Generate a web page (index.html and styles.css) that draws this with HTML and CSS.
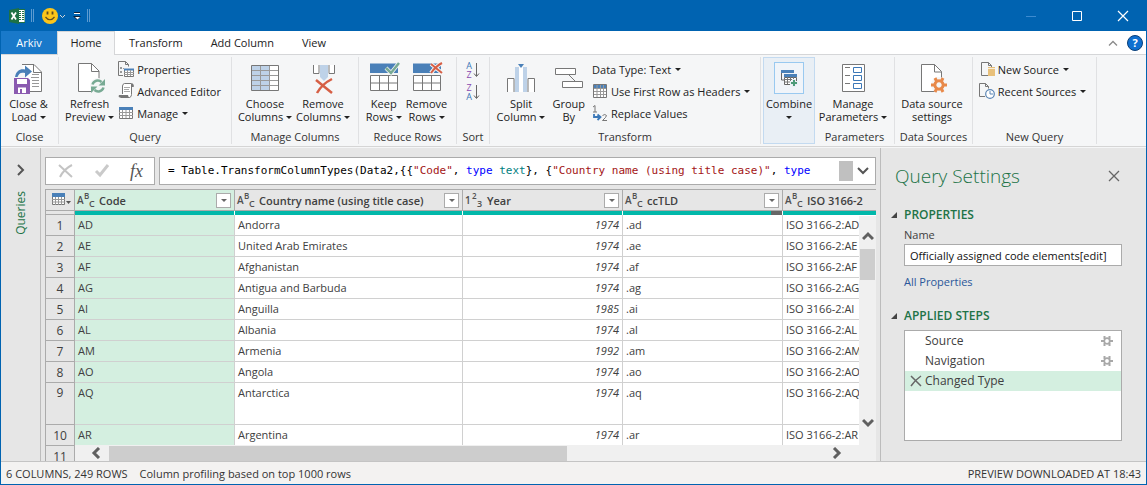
FILE: index.html
```html
<!DOCTYPE html>
<html lang="en">
<head>
<meta charset="utf-8">
<title>Power Query Editor</title>
<link rel="stylesheet" href="styles.css">
</head>
<body>
<svg class="defs" aria-hidden="true">
  <symbol id="gear" viewBox="0 0 16 16"><path fill="none" stroke="currentColor" stroke-width="3" d="M8 3.8a4.2 4.2 0 1 0 .01 0z"/><path stroke="currentColor" stroke-width="3" d="M4 1l2 4M12 1l-2 4M4 15l2-4M12 15l-2-4M0 8h4M12 8h4"/></symbol>
  <symbol id="minigear" viewBox="0 0 12 12"><circle cx="6" cy="6" r="2.8" fill="none" stroke="#a8a8a8" stroke-width="1.8"/><path stroke="#a8a8a8" stroke-width="2" d="M3.5 1v3M8.500 1v3M3.500 8v3M8.500 8v3M0 6h3M9 6h3"/></symbol>
</svg>
<div class="app">
  <header class="titlebar">
    <div class="quick">
      <svg width="16" height="16" viewBox="0 0 16 16"><path fill="#fff" d="M8 2h8v12H8z"/><path stroke="#1e7145" d="M9 3.5h3M9 5.5h3M9 7.5h3M9 9.5h3M9 11.5h3M13 3.5h2M13 5.5h2M13 7.5h2M13 9.5h2M13 11.5h2M8 1.5h8v13H8"  fill="none"/><path fill="#1e7145" d="M0 2l10-2v16L0 14z"/><path stroke="#fff" stroke-width="1.8" d="M2.5 4.5l4.5 7M7 4.5l-4.500 7"/></svg>
      <span class="tick"></span>
      <button class="plain smile" aria-label="Send a smile"><svg width="24" height="16" viewBox="0 0 24 16"><circle cx="8" cy="8" r="8" fill="#fcc51a"/><path d="M5.500 3.500v3M10.500 3.500v3" stroke="#604a20" stroke-width="1.800"/><path d="M3.500 9q4.500 5.500 9 0" fill="none" stroke="#604a20" stroke-width="1.200"/><path d="M18 7l2.500 2.500L23 7" fill="none" stroke="#d8d8d8"/></svg></button>
      <button class="plain" aria-label="Customize toolbar"><svg width="8" height="8" viewBox="0 0 8 8"><path d="M1 .5h6" stroke="#10233b"/><path d="M1 1.500h6" stroke="#fff"/><path d="M0 4h8L4 8z" fill="#10233b"/><path d="M2 5h5L4.500 7.500z" fill="#fff"/></svg></button>
      <span class="tick"></span>
    </div>
    <div class="winbtns">
      <button class="plain" aria-label="Minimize"><svg width="12" height="12"><path d="M1 6.500h10" stroke="#3d8bd0"/></svg></button>
      <button class="plain" aria-label="Maximize"><svg width="12" height="12"><path d="M1.500 1.500h9v9h-9z" fill="none" stroke="#fff"/></svg></button>
      <button class="plain" aria-label="Close"><svg width="12" height="12"><path d="M1 1l10 10M11 1L1 11" stroke="#fff" stroke-width="1.200"/></svg></button>
    </div>
  </header>
  <nav class="tabs">
    <button class="tab file">Arkiv</button>
    <button class="tab active">Home</button>
    <button class="tab">Transform</button>
    <button class="tab">Add Column</button>
    <button class="tab">View</button>
    <span class="tabend">
      <button class="plain" aria-label="Collapse the ribbon"><svg width="10" height="8"><path d="M1 6.500l4-4 4 4" fill="none" stroke="#8a8a8a" stroke-width="1.300"/></svg></button>
      <button class="help" aria-label="Help">?</button>
    </span>
  </nav>
  <section class="ribbon">
    <div class="group g-close">
      <div class="tools">
        <button class="big"><svg class="ico" viewBox="0 0 32 32"><path d="M9 2.500h12l7.500 7.500v19.500H17" fill="#fff" stroke="#777"/><path d="M20.500 2.500v8h8" fill="none" stroke="#777"/><path d="M19 12.500h7M18 15.500h8M19 18.500h7M19 21.500h7M19 24.500h7" stroke="#999"/><path d="M2 15C3 9 7 6.500 12 7.500V3.500l7 6-7 6v-4.500c-4-1-6 0-7.500 4z" fill="#4a80b8"/><path d="M1 16h14l2 2v14H1z" fill="#8a5ab0"/><path d="M4 17h10v5H4zM5 25.500h8V31H5z" fill="#fff"/><path d="M7 27h2v4H7z" fill="#8a5ab0"/></svg><span>Close &amp;<br>Load <i class="dd"></i></span></button>
      </div>
      <h3>Close</h3>
    </div>
    <div class="group g-query">
      <div class="tools">
        <button class="big"><svg class="ico" viewBox="0 0 32 32"><path d="M4.500 1.500h13l7.500 7.500v20.500H4.500z" fill="#fff" stroke="#777"/><path d="M17.500 1.500v8H25" fill="none" stroke="#777"/><circle cx="24" cy="24" r="8" fill="#f5f6f7"/><path d="M18.500 22.500a5.500 5.500 0 0 1 9-2.500M29.500 25.500a5.500 5.500 0 0 1-9 2.500" fill="none" stroke="#78aa94" stroke-width="2.500"/><path d="M31 17v6.500h-6.500zM17 31v-6.500h6.500z" fill="#78aa94"/></svg><span>Refresh<br>Preview <i class="dd"></i></span></button>
        <div class="stack">
          <button class="small"><svg class="sm" viewBox="0 0 16 16"><path d="M.5.500h7l3 3v2M5 14.500H.5V.5M7.500.5v3h3" fill="none" stroke="#777"/><path d="M2 6h2v2H2zM2 10h2v2H2z" fill="#999"/><path d="M5 7.500h1" stroke="#999"/><path d="M6.500 8.500h9v7h-9z" fill="#fff" stroke="#777"/><path d="M6 7.500h10v2H6z" fill="#4a80b8"/><path d="M6 11.500h10M6 13.500h10M9.500 9v6M12.500 9v6" stroke="#999"/></svg>Properties</button>
          <button class="small"><svg class="sm" viewBox="0 0 16 16"><path d="M4.500 11V3q0-2 2-2.500h7q2 0 2 3h-2v8q0 2.500-2 3H2.500" fill="#fff" stroke="#777"/><path d="M1 12h9q0 2 2 2.500H2Q0 14.500 1 12zM13 1h2v3h-2z" fill="#777"/><path d="M6 4.500h6M6 6.500h5M6 8.500h6" stroke="#aaa"/></svg>Advanced Editor</button>
          <button class="small"><svg class="sm" viewBox="0 0 16 16"><path d="M1.500 3.500h13v10h-13z" fill="#fff" stroke="#777"/><path d="M1 2h14v3H1z" fill="#4a80b8"/><path d="M1 7.500h14M1 10.500h14M4.500 5v8M8 5v8M11.500 5v8" stroke="#999"/></svg>Manage <i class="dd"></i></button>
        </div>
      </div>
      <h3>Query</h3>
    </div>
    <div class="group g-cols">
      <div class="tools">
        <button class="big"><svg class="ico" viewBox="0 0 32 32"><path d="M2.500 3.500h27v25h-27z" fill="#fff"/><path d="M3 4h18v24H3z" fill="#bed2e8"/><path d="M2.500 8.500h27M2.500 13.500h27M2.500 18.500h27M2.500 23.500h27M11.500 3.500v25M20.500 3.500v25" stroke="#999"/><path d="M2.500 3.500h27v25h-27z" fill="none" stroke="#777"/></svg><span>Choose<br>Columns <i class="dd"></i></span></button>
        <button class="big"><svg class="ico" viewBox="0 0 32 32"><path d="M6 3h22v9H6z" fill="#fff"/><path d="M6.500 3v8.500h5.500V3M27.500 3v8.500H22V3" fill="none" stroke="#777"/><path d="M13 3h8v12l-4 4-4-4z" fill="#bed2e8"/><path d="M9 18l16 13M25 17Q15 22 10 31" stroke="#d65f45" stroke-width="2.500" fill="none"/></svg><span>Remove<br>Columns <i class="dd"></i></span></button>
      </div>
      <h3>Manage Columns</h3>
    </div>
    <div class="group g-rows">
      <div class="tools">
        <button class="big"><svg class="ico" viewBox="0 0 32 32"><path d="M2 1.500h28v9.500H2z" fill="#4a80b8"/><path d="M2.500 13.500h27v15h-27zM2.500 21h27M11.500 13.500v15M20.500 13.500v15" fill="#fff" stroke="#777"/><path d="M18 6l5 5L31 1" fill="none" stroke="#f5f6f7" stroke-width="4"/><path d="M18 6l5 5L31 1" fill="none" stroke="#78aa94" stroke-width="2.500"/></svg><span>Keep<br>Rows <i class="dd"></i></span></button>
        <button class="big"><svg class="ico" viewBox="0 0 32 32"><path d="M2 1.500h28v9.500H2z" fill="#4a80b8"/><path d="M2.500 13.500h27v15h-27zM2.500 21h27M11.500 13.500v15M20.500 13.500v15" fill="#fff" stroke="#777"/><path d="M20 2l11 9M31 1q-6 3-11 10" fill="none" stroke="#f5f6f7" stroke-width="4"/><path d="M20 2l11 9M31 1q-6 3-11 10" fill="none" stroke="#d65f45" stroke-width="2"/></svg><span>Remove<br>Rows <i class="dd"></i></span></button>
      </div>
      <h3>Reduce Rows</h3>
    </div>
    <div class="group g-sort">
      <div class="tools sorts">
        <button class="plain" aria-label="Sort ascending"><span class="az"><span class="a">A</span><span class="z">Z</span></span><svg width="8" height="18"><path d="M3.500 2v13M1 12.500l2.500 3 2.500-3" fill="none" stroke="#666"/></svg></button>
        <button class="plain" aria-label="Sort descending"><span class="az"><span class="z">Z</span><span class="a">A</span></span><svg width="8" height="18"><path d="M3.500 2v13M1 12.500l2.500 3 2.500-3" fill="none" stroke="#666"/></svg></button>
      </div>
      <h3>Sort</h3>
    </div>
    <div class="group g-trans">
      <div class="tools">
        <button class="big"><svg class="ico" viewBox="0 0 32 32"><path d="M2.500 30V16.500H9V30M29.500 30V16.500H23V30" fill="#fff" stroke="#777"/><path d="M10 5h12v25H10z" fill="#bed2e8"/><path d="M14 5h4v25h-4z" fill="#fff"/><path d="M13 2h6l-3 4z" fill="#4a80b8"/></svg><span>Split<br>Column <i class="dd"></i></span></button>
        <button class="big"><svg class="ico" viewBox="0 0 32 32"><path d="M15 12l8 8" stroke="#777"/><path d="M2.500 6.500h20v6h-20zM9.500 19.500h20v6h-20z" fill="#fff" stroke="#777"/></svg><span>Group<br>By</span></button>
        <div class="stack">
          <button class="small">Data Type: Text <i class="dd"></i></button>
          <button class="small"><svg class="sm" viewBox="0 0 16 16"><path d="M1.500 1.500h13v13h-13z" fill="#fff" stroke="#777"/><path d="M2 2h12v3H2z" fill="#4a80b8"/><path d="M2 8.500h12M2 11.500h12M5 2v12M8.500 2v12M11.500 2v12M2 5.500h12" stroke="#999"/></svg>Use First Row as Headers <i class="dd"></i></button>
          <button class="small"><svg class="sm" viewBox="0 0 16 16"><path d="M1 2l2-1.500V7M1 7h4M10.500 10.500q2.500-2 4 0 0 1.500-4 5h4.500" fill="none" stroke="#777"/><path d="M2 9v3h6M5.500 9.500L8.500 12l-3 3" fill="none" stroke="#3b78b8" stroke-width="1.800"/></svg>Replace Values</button>
        </div>
      </div>
      <h3>Transform</h3>
    </div>
    <div class="group g-combine">
      <button class="big"><span class="frame"><svg width="18" height="18" viewBox="0 0 18 18"><path d="M1 1h13v3H1z" fill="#4a80b8"/><path d="M1.500 4v7H4" fill="none" stroke="#666"/><path d="M4.500 8.500h12v7h-12z" fill="#fff" stroke="#666"/><path d="M4 5h13v3H4z" fill="#4a80b8"/><path d="M4 10.500h12M4 13h12M7.500 8v7M10.500 8v7M13.500 8v7" stroke="#777"/><path d="M14 10v8M10 14h8" stroke="#e9eff5" stroke-width="4"/><path d="M14 11v6M11 14h6" stroke="#4d9b79" stroke-width="2"/></svg></span><span>Combine<br><i class="dd"></i></span></button>
    </div>
    <div class="group g-param">
      <div class="tools">
        <button class="big"><svg class="ico" viewBox="0 0 32 32"><path d="M5.500 2.500h22v27h-22z" fill="#fff" stroke="#777"/><path d="M8 5.500h5M8 13.500h5M8 21.500h5" stroke="#777"/><path d="M16.500 5.500h8v5h-8zM16.500 13.500h8v5h-8zM16.500 21.500h8v5h-8z" fill="#fff" stroke="#3b78b8"/></svg><span>Manage<br>Parameters <i class="dd"></i></span></button>
      </div>
      <h3>Parameters</h3>
    </div>
    <div class="group g-data">
      <div class="tools">
        <button class="big"><svg class="ico" viewBox="0 0 32 32"><path d="M5.500 2.500h13l7 7v20h-20z" fill="#fff" stroke="#777"/><path d="M18.500 2.500v7.500h7" fill="none" stroke="#777"/><circle cx="23" cy="23" r="8" fill="#f5f6f7"/><svg x="15" y="15" width="16" height="16" color="#e8894a"><use href="#gear"/></svg></svg><span>Data source<br>settings</span></button>
      </div>
      <h3>Data Sources</h3>
    </div>
    <div class="group g-new">
      <div class="tools">
        <div class="stack">
          <button class="small"><svg class="sm" viewBox="0 0 16 16"><path d="M2.500 1.500h7l3 3v2M9 14.500H2.500v-13M9.500 1.500v3h3" fill="none" stroke="#777"/><path d="M9 6h7v9H9z" fill="#e8c07a"/><path d="M9 7.500h7" stroke="#fff" stroke-width=".700"/></svg>New Source <i class="dd"></i></button>
          <button class="small"><svg class="sm" viewBox="0 0 16 16"><path d="M.5.500h6l3 3v2M6 13.500H.5V.5M6.500.5v3h3" fill="none" stroke="#777"/><circle cx="11" cy="11" r="4.300" fill="#fff" stroke="#5b86b5" stroke-width="1.200"/><path d="M11 8v3h3" fill="none" stroke="#5b86b5"/></svg>Recent Sources <i class="dd"></i></button>
        </div>
      </div>
      <h3>New Query</h3>
    </div>
  </section>

  <main class="body">
    <aside class="rail">
      <button class="plain" aria-label="Expand queries"><svg width="10" height="14"><path d="M2 2l5 5-5 5" fill="none" stroke="#555" stroke-width="2"/></svg></button>
      <span class="vert">Queries</span>
    </aside>
    <section class="center">
      <div class="formula">
        <div class="fbtns">
          <button class="plain" aria-label="Cancel"><svg width="16" height="14"><path d="M1 1l13 12M14 1Q6 5 2 13" stroke="#c4c4c4" stroke-width="2" fill="none"/></svg></button>
          <button class="plain" aria-label="Confirm"><svg width="16" height="14"><path d="M2 7l4 4 8-10" stroke="#cacaca" stroke-width="3" fill="none"/></svg></button>
          <button class="plain fx" aria-label="Add step">fx</button>
        </div>
        <div class="fbox">
          <code>= Table.TransformColumnTypes(Data2,{{<span class="s">"Code"</span>, <span class="k">type</span> <span class="t">text</span>}, {<span class="s">"Country name (using title case)"</span>, <span class="k">type</span></code>
          <span class="fthumb"></span>
          <button class="plain" aria-label="Expand formula bar"><svg width="12" height="10"><path d="M1 2l5 5 5-5" fill="none" stroke="#555" stroke-width="2"/></svg></button>
        </div>
      </div>
      <div class="grid">
        <table>
          <colgroup><col class="c0"><col class="c1"><col class="c2"><col class="c1"><col class="c1"><col class="c1"></colgroup>
          <thead>
            <tr>
              <th class="corner"><button class="plain" aria-label="Table menu"><svg width="20" height="14"><path d="M.5 1.500h12v10H.5z" fill="#fff" stroke="#777"/><path d="M0 0h13v4H0z" fill="#4a80b8"/><path d="M0 6.500h13M0 9h13M3.500 4v8M6.500 4v8M9.500 4v8" stroke="#999"/><path d="M14 8h5l-2.500 3z" fill="#555"/></svg></button></th>
              <th class="sel"><div class="h"><span class="ty"><b>A</b><b class="up">B</b><b class="lo">C</b></span><span class="nm">Code</span><button class="filter" aria-label="Filter Code"></button></div></th>
              <th><div class="h"><span class="ty"><b>A</b><b class="up">B</b><b class="lo">C</b></span><span class="nm">Country name (using title case)</span><button class="filter" aria-label="Filter Country name"></button></div></th>
              <th><div class="h"><span class="ty"><b>1</b><b class="up">2</b><b class="lo">3</b></span><span class="nm">Year</span><button class="filter" aria-label="Filter Year"></button></div></th>
              <th><div class="h"><span class="ty"><b>A</b><b class="up">B</b><b class="lo">C</b></span><span class="nm">ccTLD</span><button class="filter" aria-label="Filter ccTLD"></button></div></th>
              <th><div class="h"><span class="ty"><b>A</b><b class="up">B</b><b class="lo">C</b></span><span class="nm">ISO 3166-2</span></div></th>
            </tr>
            <tr class="quality"><td></td><td></td><td></td><td></td><td class="part"></td><td></td></tr>
          </thead>
          <tbody>
            <tr><th>1</th><td>AD</td><td>Andorra</td><td>1974</td><td>.ad</td><td>ISO 3166-2:AD</td></tr>
            <tr><th>2</th><td>AE</td><td>United Arab Emirates</td><td>1974</td><td>.ae</td><td>ISO 3166-2:AE</td></tr>
            <tr><th>3</th><td>AF</td><td>Afghanistan</td><td>1974</td><td>.af</td><td>ISO 3166-2:AF</td></tr>
            <tr><th>4</th><td>AG</td><td>Antigua and Barbuda</td><td>1974</td><td>.ag</td><td>ISO 3166-2:AG</td></tr>
            <tr><th>5</th><td>AI</td><td>Anguilla</td><td>1985</td><td>.ai</td><td>ISO 3166-2:AI</td></tr>
            <tr><th>6</th><td>AL</td><td>Albania</td><td>1974</td><td>.al</td><td>ISO 3166-2:AL</td></tr>
            <tr><th>7</th><td>AM</td><td>Armenia</td><td>1992</td><td>.am</td><td>ISO 3166-2:AM</td></tr>
            <tr><th>8</th><td>AO</td><td>Angola</td><td>1974</td><td>.ao</td><td>ISO 3166-2:AO</td></tr>
            <tr class="tall"><th>9</th><td>AQ</td><td>Antarctica</td><td>1974</td><td>.aq</td><td>ISO 3166-2:AQ</td></tr>
            <tr><th>10</th><td>AR</td><td>Argentina</td><td>1974</td><td>.ar</td><td>ISO 3166-2:AR</td></tr>
            <tr><th>11</th><td></td><td></td><td></td><td></td><td></td></tr>
          </tbody>
        </table>
        <div class="vscroll"><svg width="12" height="10"><path d="M1 8l5-5 5 5" fill="none" stroke="#606060" stroke-width="3"/></svg><span class="vthumb"></span><svg class="down" width="12" height="10"><path d="M1 2l5 5 5-5" fill="none" stroke="#606060" stroke-width="3"/></svg></div>
        <div class="hscroll"><svg width="10" height="12"><path d="M8 1L3 6l5 5" fill="none" stroke="#606060" stroke-width="3"/></svg><span class="hthumb"></span><svg class="right" width="10" height="12"><path d="M2 1l5 5-5 5" fill="none" stroke="#606060" stroke-width="3"/></svg></div>
      </div>
    </section>
    <aside class="settings">
      <div class="shead"><h2>Query Settings</h2><button class="plain" aria-label="Close pane"><svg width="12" height="12"><path d="M1 1l10 10M11 1L1 11" stroke="#666" stroke-width="1.300"/></svg></button></div>
      <h4><i class="tri"></i>PROPERTIES</h4>
      <label for="qname">Name</label>
      <input id="qname" type="text" value="Officially assigned code elements[edit]">
      <a href="#">All Properties</a>
      <h4 class="second"><i class="tri"></i>APPLIED STEPS</h4>
      <ul class="steps">
        <li><span>Source</span><svg width="12" height="12"><use href="#minigear"/></svg></li>
        <li><span>Navigation</span><svg width="12" height="12"><use href="#minigear"/></svg></li>
        <li class="on"><svg width="12" height="12"><path d="M1 1l10 10M11 1Q5 5 1 11" stroke="#666" stroke-width="1.500" fill="none"/></svg><span>Changed Type</span></li>
      </ul>
    </aside>
  </main>
  <footer class="status"><span>6 COLUMNS, 249 ROWS</span><span>Column profiling based on top 1000 rows</span><span class="end">PREVIEW DOWNLOADED AT 18:43</span></footer>
</div>
</body>
</html>
```
FILE: styles.css
```css
* { box-sizing: border-box; }
body { margin: 0; font: 11px/13px "Open Sans", "Noto Sans", sans-serif; color: #222; }
button, input { font: inherit; color: inherit; }
h2, h3, h4, ul { margin: 0; padding: 0; font-weight: 400; }
.defs { position: absolute; width: 0; height: 0; }
svg { display: block; flex: none; }
.plain { border: 0; background: none; padding: 0; display: flex; align-items: center; justify-content: center; }
.app { height: 100vh; display: flex; flex-direction: column; border: 1px solid #0063b1; border-top: 0; background: #e6e6e6; overflow: hidden; }

.titlebar { flex: none; height: 31px; background: #0063b1; display: flex; justify-content: space-between; align-items: center; }
.quick { display: flex; align-items: center; padding-left: 8px; }
.tick { width: 3px; height: 13px; margin-left: 6px; border: 1px solid #5c9bd1; border-width: 0 1px; }
.smile { margin: 0 7px 0 8px; }
.quick .tick:last-child { margin-left: 6px; }
.winbtns { display: flex; }
.winbtns button { width: 46px; height: 30px; }

.tabs { flex: none; display: flex; height: 24px; background: #fff; border-bottom: 1px solid #d5d6d8; }
.tab { border: 0; background: none; padding: 0 14px; height: 23px; }
.tab.file { width: 56px; background: #1979ca; color: #fff; padding: 0; }
.tab.active { width: 58px; height: 24px; padding: 0 0 2px; background: #f5f6f7; border: 1px solid #d5d6d8; border-width: 1px 1px 0; }
.tabend { margin-left: auto; display: flex; align-items: center; gap: 9px; padding-right: 3px; }
.help { width: 16px; height: 16px; border: 1px solid #0a3f78; border-radius: 50%; background: #0f6fd0; color: #fff; font-weight: 700; line-height: 13px; padding: 0; }

.ribbon { flex: none; display: flex; height: 92px; padding: 2px 0; background: #f5f6f7; border-bottom: 1px solid #d5d5d5; }
.group { flex: none; display: flex; flex-direction: column; border-right: 1px solid #e0e1e3; padding: 1px 0; }
.tools { flex: 1; display: flex; justify-content: center; }
.group h3 { font-size: 11px; line-height: 13px; text-align: center; color: #333; }
.big { border: 0; background: none; padding: 4px 0 0; display: flex; flex-direction: column; align-items: center; gap: 3px; text-align: center; white-space: nowrap; }
.big > span:last-child { line-height: 13px; }
.ico { width: 32px; height: 32px; }
.sm { width: 16px; height: 16px; margin-right: 3px; }
.stack { display: flex; flex-direction: column; }
.small { border: 0; background: none; padding: 0; height: 22px; display: flex; align-items: center; white-space: nowrap; }
.dd { display: inline-block; border: 3px solid transparent; border-top-color: #222; border-bottom: 0; vertical-align: 2px; }
.small .dd { margin-left: 4px; }
.g-close { width: 58px; }
.g-close .tools { padding-right: 2px; }
.g-query { width: 173px; }
.g-query .tools { padding-right: 4px; }
.g-query .stack { margin-left: 4px; }
.g-cols { width: 127px; }
.g-rows { width: 98px; }
.g-cols .tools, .g-rows .tools { gap: 4px; padding-right: 2px; }
.g-sort { width: 33px; }
.sorts { flex-direction: column; align-items: center; justify-content: flex-start; gap: 4px; padding-top: 3px; }
.az { display: flex; flex-direction: column; width: 7px; font-size: 9px; line-height: 9px; }
.a { color: #3b78b8; }
.z { color: #8a4ab0; }
.g-trans { width: 271px; }
.g-trans .tools { padding-right: 3px; }
.g-trans .big { margin-right: 7px; }
.g-combine { width: 52px; margin-left: 2px; border: 1px solid #c3daf0; background: #e9eff5; padding: 0; align-items: center; }
.frame { width: 30px; height: 32px; border: 1px solid #99c9f0; background: #f0f4f9; display: flex; align-items: center; justify-content: center; }
.g-param { width: 80px; }
.g-data { width: 78px; }
.g-param .tools, .g-data .tools { padding-right: 3px; }
.g-new { width: 124px; }
.g-new .tools { padding-right: 4px; }

.body { flex: 1; min-height: 0; display: flex; border-top: 1px solid #f5f6f7; }
.rail { flex: none; width: 40px; border-right: 1px solid #bcbcbc; display: flex; flex-direction: column; align-items: center; padding-top: 15px; gap: 14px; }
.vert { writing-mode: vertical-rl; transform: rotate(180deg); color: #217346; font-size: 12px; line-height: 16px; }
.center { flex: 1; min-width: 0; display: flex; flex-direction: column; padding: 9px 4px 0; gap: 4px; }
.formula { flex: none; display: flex; gap: 4px; height: 28px; }
.fbtns, .fbox { background: #fff; border: 1px solid #ababab; display: flex; align-items: center; }
.fbtns { width: 110px; justify-content: space-between; padding: 0 11px 0 12px; }
.fx { font: italic 18px/18px "Liberation Serif", serif; color: #555; }
.fbox { flex: 1; min-width: 0; padding: 0 6px 0 8px; }
.fbox code { flex: 1; min-width: 0; overflow: hidden; white-space: pre; font: 11px/16px "DejaVu Sans Mono", monospace; color: #000; }
.s { color: #a31515; } .k { color: #00f; } .t { color: #008080; }
.fthumb { width: 14px; height: 20px; background: #c0c0c0; margin-right: 4px; }

.grid { flex: 1; min-height: 0; position: relative; overflow: hidden; border: 1px solid #ababab; border-width: 1px 0 0 1px; }
table { table-layout: fixed; border-collapse: separate; border-spacing: 0; width: 897px; color: #404040; }
.c0 { width: 29px; } .c1 { width: 160px; } .c2 { width: 228px; }
th, td { padding: 0; overflow: hidden; white-space: nowrap; }
thead th { height: 21px; background: #e6e6e6; border-right: 1px solid #ababab; border-bottom: 1px solid #ababab; font-weight: 600; text-align: left; }
thead th.sel { background: #d4efe0; }
.corner button { width: 28px; padding-left: 4px; }
.h { display: flex; align-items: center; padding: 0 3px 0 2px; height: 20px; }
.nm { flex: 1; padding-left: 5px; }
.ty { flex: none; display: flex; width: 17px; height: 18px; color: #505050; }
.ty b { font-weight: 600; font-size: 10px; line-height: 10px; width: 7px; padding-top: 4px; }
.ty .up { font-size: 8px; width: 5px; padding-top: 0; }
.ty .lo { font-size: 9px; width: 5px; padding-top: 8px; }
.filter { flex: none; width: 15px; height: 15px; padding: 0; border: 1px solid #ababab; background: #fff; display: flex; align-items: center; justify-content: center; }
.filter::before { content: ""; border: 3px solid transparent; border-top-color: #666; border-bottom: 0; }
.quality td { height: 4px; background: #01b8aa; border-right: 1px solid #fff; }
.quality td:first-child { background: #e6e6e6; border-right-color: #ababab; border-bottom: 1px solid #ababab; }
.quality .part { background: linear-gradient(to right, #01b8aa 93%, #666 93%); }
tbody th { height: 21px; background: #e6e6e6; border: 1px solid #ababab; border-width: 0 1px 1px 0; font-weight: 400; font-size: 12px; }
tbody td { height: 21px; background: #fff; border: 1px solid #d0d0d0; border-width: 0 1px 1px 0; padding: 0 3px 1px; }
tbody td:nth-child(2) { background: #d4efe0; }
tbody td:nth-child(4) { text-align: right; font-style: italic; }
tbody .tall th, tbody .tall td { height: 42px; vertical-align: top; padding-top: 3px; }
.vscroll { position: absolute; right: 0; top: 26px; bottom: 0; width: 17px; background: #f0f0f0; display: flex; flex-direction: column; align-items: center; padding: 15px 0 33px; }
.vthumb { width: 15px; height: 31px; margin-top: 8px; background: #cdcdcd; }
.down { margin-top: auto; }
.hscroll { position: absolute; left: 29px; right: 0; bottom: 0; height: 16px; background: #f0f0f0; display: flex; align-items: center; padding: 0 34px 0 16px; }
.hthumb { width: 61%; height: 15px; margin-left: 8px; background: #cdcdcd; }
.right { margin-left: auto; }

.settings { flex: none; width: 266px; border-left: 1px solid #bcbcbc; display: flex; flex-direction: column; align-items: stretch; padding: 15px 24px 20px 23px; color: #404040; font-size: 12px; line-height: 16px; }
.shead { display: flex; justify-content: space-between; align-items: center; margin-left: -9px; padding-right: 2px; height: 26px; }
.shead h2 { font-size: 19px; font-weight: 300; color: #217346; line-height: 26px; }
.settings h4 { font-weight: 600; color: #217346; margin: 18px 0 4px -13px; display: flex; align-items: center; }
.tri { border: 3px solid transparent; border-right-color: #444; border-bottom-color: #444; margin-right: 7px; }
.settings label { font-size: 11px; line-height: 16px; }
.settings input { height: 22px; border: 1px solid #ababab; background: #fff; padding: 0 5px; width: 100%; color: #111; font-size: 11px; margin-top: 1px; }
.settings a { color: #2b579a; text-decoration: none; margin-top: 8px; font-size: 11px; }
.settings h4.second { margin-top: 18px; margin-bottom: 6px; }
.steps { flex: 1; list-style: none; background: #fff; border: 1px solid #ababab; font-size: 12px; }
.steps li { height: 20px; display: flex; align-items: center; justify-content: space-between; padding: 0 8px 0 20px; }
.steps li.on { background: #d4efe0; padding-left: 5px; justify-content: flex-start; gap: 3px; }

.status { flex: none; height: 23px; background: #f3f2f1; border-top: 1px solid #c4c4c4; display: flex; align-items: center; gap: 12px; padding: 0 5px; color: #333; }
.status .end { margin-left: auto; }
```
